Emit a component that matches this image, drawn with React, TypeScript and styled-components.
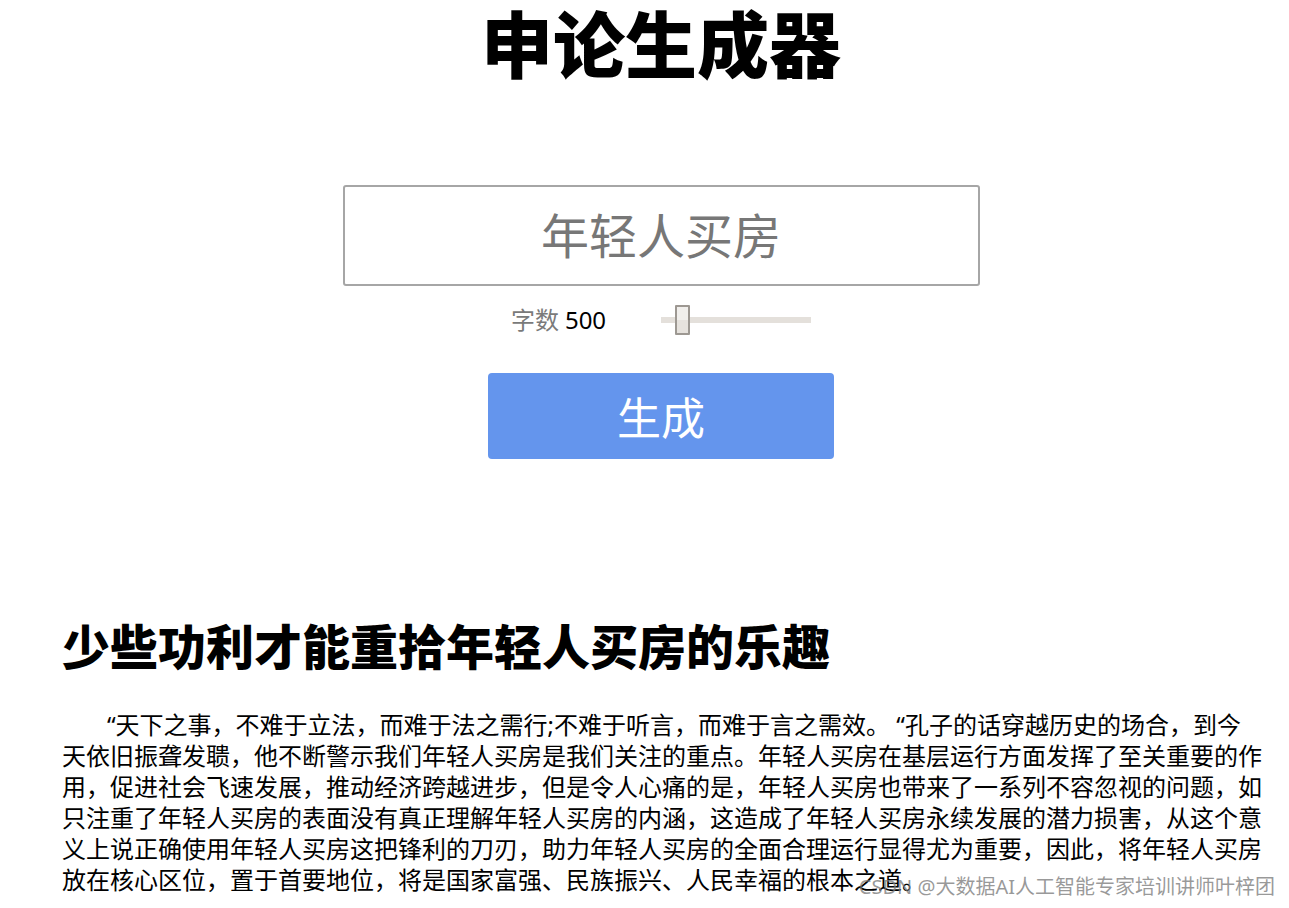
import React from "react";
import styled, { createGlobalStyle } from "styled-components";

const GlobalStyle = createGlobalStyle`
  html, body {
    margin: 0;
    padding: 0;
    background: #ffffff;
    overflow: hidden;
  }
  body {
    font-family: "Noto Sans", "Noto Sans CJK SC", sans-serif;
    color: #000;
  }
`;

const Page = styled.main`
  position: relative;
  width: 1289px;
  height: 908px;
  box-sizing: border-box;
  padding-left: 62px;
`;

const Column = styled.div`
  width: 1198px;
  display: flex;
  flex-direction: column;
  align-items: center;
`;

const Title = styled.h1`
  margin: 0;
  padding-top: 1px;
  font-family: "Noto Sans CJK SC", sans-serif;
  font-size: 72px;
  font-weight: 900;
  line-height: 80px;
  letter-spacing: 0;
`;

const TopicInput = styled.input`
  margin-top: 104px;
  width: 637px;
  height: 101px;
  box-sizing: border-box;
  border: 2px solid #a6a6a6;
  border-radius: 3px;
  outline: none;
  text-align: center;
  font-family: "Noto Sans CJK SC", sans-serif;
  font-size: 48px;
  color: #777777;
  background: #fff;
  padding: 0 0 6px 0;
`;

const Controls = styled.div`
  margin-top: 19px;
  height: 30px;
  display: flex;
  align-items: center;
  gap: 55px;
`;

const CountLabel = styled.span`
  font-size: 24px;
  line-height: 30px;
  color: #7a7a7a;
  font-family: "Noto Sans", "Noto Sans CJK SC", sans-serif;
`;

const CountValue = styled.span`
  color: #000;
  margin-left: 6px;
`;

const Range = styled.input`
  -webkit-appearance: none;
  appearance: none;
  width: 150px;
  height: 6px;
  margin: 0;
  background: #e4e0db;
  outline: none;
  border: none;

  &::-webkit-slider-thumb {
    -webkit-appearance: none;
    appearance: none;
    width: 15px;
    height: 30px;
    box-sizing: border-box;
    border: 2px solid #9d9892;
    border-radius: 1px;
    background: linear-gradient(#f1efec 0 50%, #e6e2dd 50% 100%);
    cursor: pointer;
  }
`;

const GenerateButton = styled.button`
  margin-top: 38px;
  width: 346px;
  height: 86px;
  border: none;
  border-radius: 4px;
  background: #6495ed;
  color: #ffffff;
  font-family: "Noto Sans CJK SC", sans-serif;
  font-size: 44px;
  line-height: 86px;
  padding: 0;
  cursor: pointer;
`;

const Article = styled.article`
  width: 1201px;
  margin-top: 155px;
`;

const Heading = styled.h2`
  margin: 0;
  font-family: "Noto Sans CJK SC", sans-serif;
  font-size: 48px;
  font-weight: 900;
  line-height: 60px;
`;

const Body = styled.p`
  margin: 35px 0 0 0;
  font-size: 24px;
  line-height: 31px;
  text-indent: 45px;
  color: #000;
  text-spacing-trim: space-all;
  word-break: normal;
`;

const Watermark = styled.div`
  position: absolute;
  right: 14px;
  bottom: 8px;
  font-family: "Noto Sans", "Noto Sans CJK SC", sans-serif;
  font-size: 20px;
  line-height: 26px;
  color: rgba(120, 120, 120, 0.75);
  pointer-events: none;
`;

const text =
  "“天下之事，不难于立法，而难于法之需行;不难于听言，而难于言之需效。 “孔子的话穿越历史的场合，到今天依旧振聋发聩，他不断警示我们年轻人买房是我们关注的重点。年轻人买房在基层运行方面发挥了至关重要的作用，促进社会飞速发展，推动经济跨越进步，但是令人心痛的是，年轻人买房也带来了一系列不容忽视的问题，如只注重了年轻人买房的表面没有真正理解年轻人买房的内涵，这造成了年轻人买房永续发展的潜力损害，从这个意义上说正确使用年轻人买房这把锋利的刀刃，助力年轻人买房的全面合理运行显得尤为重要，因此，将年轻人买房放在核心区位，置于首要地位，将是国家富强、民族振兴、人民幸福的根本之道。";

export default function App() {
  const [count, setCount] = React.useState(500);
  return (
    <>
      <GlobalStyle />
      <Page>
        <Column>
          <Title>申论生成器</Title>
          <TopicInput defaultValue="年轻人买房" />
          <Controls>
            <CountLabel>
              字数<CountValue>{count}</CountValue>
            </CountLabel>
            <Range
              type="range"
              min={0}
              max={5000}
              step={100}
              value={count}
              onChange={(e) => setCount(Number(e.target.value))}
            />
          </Controls>
          <GenerateButton>生成</GenerateButton>
        </Column>
        <Article>
          <Heading>少些功利才能重拾年轻人买房的乐趣</Heading>
          <Body>{text}</Body>
        </Article>
        <Watermark>CSDN @大数据AI人工智能专家培训讲师叶梓团</Watermark>
      </Page>
    </>
  );
}
